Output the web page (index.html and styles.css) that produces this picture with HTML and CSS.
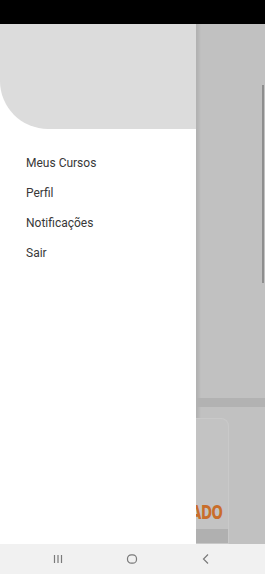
FILE: index.html
```html
<!DOCTYPE html>
<html lang="pt">
<head>
<meta charset="utf-8">
<link rel="stylesheet" href="styles.css">
</head>
<body>
<div class="screen">
  <div class="statusbar"></div>
  <div class="main">
    <nav class="drawer">
      <div class="drawer-header"></div>
      <ul class="menu">
        <li>Meus Cursos</li>
        <li>Perfil</li>
        <li>Notificações</li>
        <li>Sair</li>
      </ul>
    </nav>
    <div class="backdrop">
      <div class="scroll-line"></div>
      <div class="band"></div>
      <div class="card">
        <span class="card-label">ADO</span>
        <div class="card-foot"></div>
      </div>
    </div>
  </div>
  <div class="navbar">
    <svg class="nav-icon" width="12" height="12" viewBox="0 0 12 12"><path d="M2.5 2v8M6 2v8M9.5 2v8" stroke="#7a7a7a" stroke-width="1.2" fill="none"/></svg>
    <svg class="nav-icon" width="12" height="12" viewBox="0 0 12 12"><rect x="1.5" y="1.8" width="9" height="8.4" rx="3.8" stroke="#7a7a7a" stroke-width="1.2" fill="none"/></svg>
    <svg class="nav-icon" width="12" height="12" viewBox="0 0 12 12"><path d="M8 1.5L3.5 6L8 10.5" stroke="#7a7a7a" stroke-width="1.2" fill="none"/></svg>
  </div>
</div>
</body>
</html>
```
FILE: styles.css
```css
* { box-sizing: border-box; }
html, body { margin: 0; padding: 0; }
body { width: 265px; height: 574px; overflow: hidden; font-family: Roboto, "Noto Sans", sans-serif; }
.screen { display: flex; flex-direction: column; height: 574px; }
.statusbar { height: 24px; background: #000; flex: none; }
.main { display: flex; flex: 1; min-height: 0; }
.drawer { width: 196px; flex: none; background: #fff; display: flex; flex-direction: column; }
.drawer-header { height: 105px; background: #dcdcdc; border-bottom-left-radius: 48px; }
.menu { list-style: none; margin: 0; padding: 19px 0 0 26px; }
.menu li { height: 30px; line-height: 30px; font-size: 12px; color: #383838; }
.backdrop { flex: 1; background: #c1c1c1; display: flex; flex-direction: column; overflow: hidden;
  box-shadow: inset 5px 0 3px -2px rgba(0,0,0,0.08); }
.scroll-line { width: 2px; height: 198px; margin: 61px 1px 0 auto; background: #8e8e8e; }
.band { height: 9px; margin-top: 115px; background: #b2b2b2; }
.card { margin-top: 11px; width: 33px; flex: 1; background: #c3c3c3; border: 1px solid #c9c9c9; border-left: none;
  border-top-right-radius: 8px; display: flex; flex-direction: column; }
.card-label { margin-top: 83px; margin-left: -5px; font-family: "DejaVu Sans Condensed", "DejaVu Sans", sans-serif;
  font-weight: bold; font-size: 19px; line-height: 20px; color: #c96d2a; letter-spacing: -0.5px;
  transform: scaleX(0.78); transform-origin: left center; white-space: nowrap; }
.card-foot { margin-top: auto; height: 14px; background: #b0b0b0; }
.navbar { height: 30px; flex: none; background: #f1f1f1; display: flex; justify-content: space-between; align-items: center; padding: 0 53px 0 52px; }
.nav-icon { display: block; }
```
